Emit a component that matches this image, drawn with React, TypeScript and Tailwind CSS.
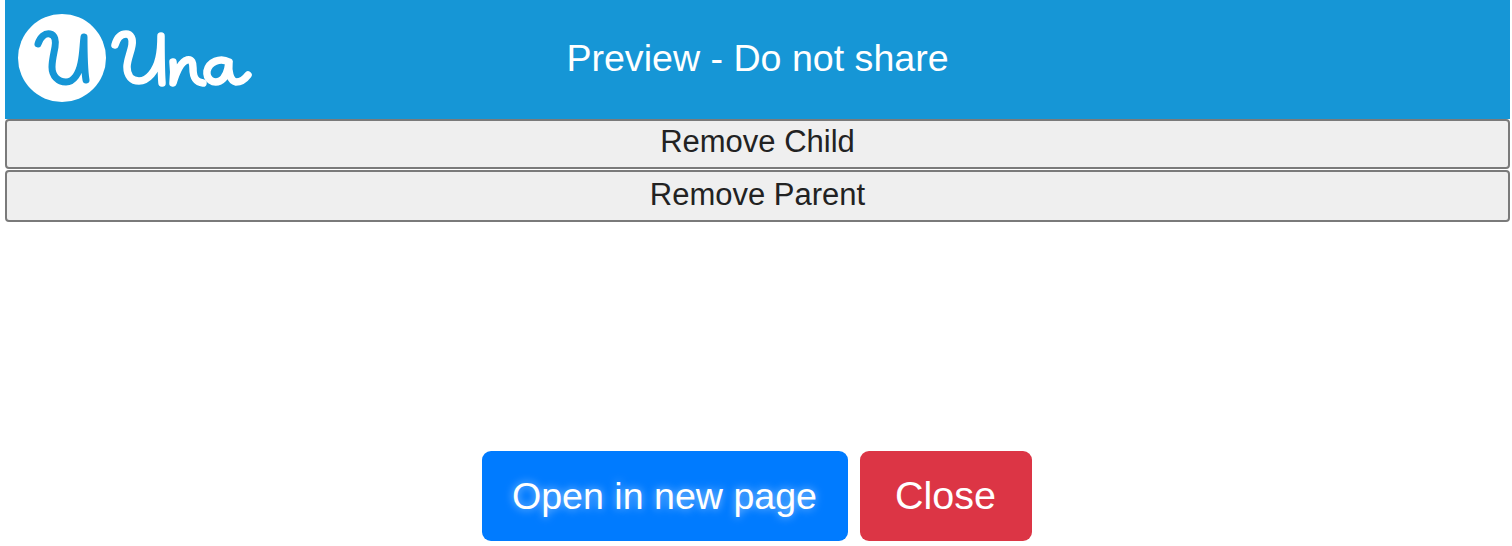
function UnaLogo() {
  return (
    <svg width="240" height="92" viewBox="16 12 240 92" fill="none" className="shrink-0">
      <circle cx="62" cy="58" r="44" fill="#fff" />
      <path
        d="M38 44C40 37 45 33 50 34C55 35 56 41 55 47C54 53 52 60 52 67C52 76 58 82 66 82C74 82 79 73 81 63C83 54 83 44 84 37C84 50 84 68 86 80"
        stroke="#1696d6"
        strokeWidth="7"
        strokeLinecap="round"
        strokeLinejoin="round"
      />
      <path
        d="M115 45C117 38 121 34 126 34C131 34 133 39 132 45C131 52 127 60 127 67C127 76 132 81 139 81C148 81 156 71 159 58C161 50 161 43 161 36C161 50 161 70 162 83"
        stroke="#fff"
        strokeWidth="7.5"
        strokeLinecap="round"
        strokeLinejoin="round"
      />
      <path
        d="M173 62C174 69 174 76 173 83C176 73 181 62 187 60C192 59 193 63 193 68C193 75 194 82 203 83"
        stroke="#fff"
        strokeWidth="7.5"
        strokeLinecap="round"
        strokeLinejoin="round"
      />
      <path
        d="M229 62C220 57 209 62 207 71C206 79 213 84 220 81C226 78 228 71 229 62C228 71 230 81 236 82C241 82 245 79 248 75"
        stroke="#fff"
        strokeWidth="7.5"
        strokeLinecap="round"
        strokeLinejoin="round"
      />
    </svg>
  )
}

export default function App() {
  return (
    <div className="h-[546px] w-[1512px] overflow-hidden bg-white pl-[5px] pr-[2px] font-['Liberation_Sans',Arial,sans-serif]">
      {/* Header */}
      <div className="relative flex h-[119px] items-center justify-center bg-[#1696d6] pb-[2px]">
        <div className="absolute left-[11px] top-[12px]">
          <UnaLogo />
        </div>
        <h1 className="text-[37.6px] leading-none text-white">Preview - Do not share</h1>
      </div>

      <button className="block h-[50px] w-full rounded-[4px] border-2 border-[#7a7a7a] bg-[#efefef] pb-[5px] text-[31px] leading-none text-[#222]">
        Remove Child
      </button>
      <button className="mt-[1px] block h-[52px] w-full rounded-[4px] border-2 border-[#7a7a7a] bg-[#efefef] pb-[4px] text-[31px] leading-none text-[#222]">
        Remove Parent
      </button>

      <div className="mt-[229px] flex justify-center gap-[12px] pr-[2px]">
        <button className="h-[90px] w-[366px] rounded-[9px] bg-[#007bff] pt-[1px] text-[37.6px] leading-none text-white [text-shadow:0_0_8px_rgba(255,255,255,0.6)]">
          Open in new page
        </button>
        <button className="h-[90px] w-[172px] rounded-[9px] bg-[#dc3545] text-[39.5px] leading-none text-white">
          Close
        </button>
      </div>
    </div>
  )
}
